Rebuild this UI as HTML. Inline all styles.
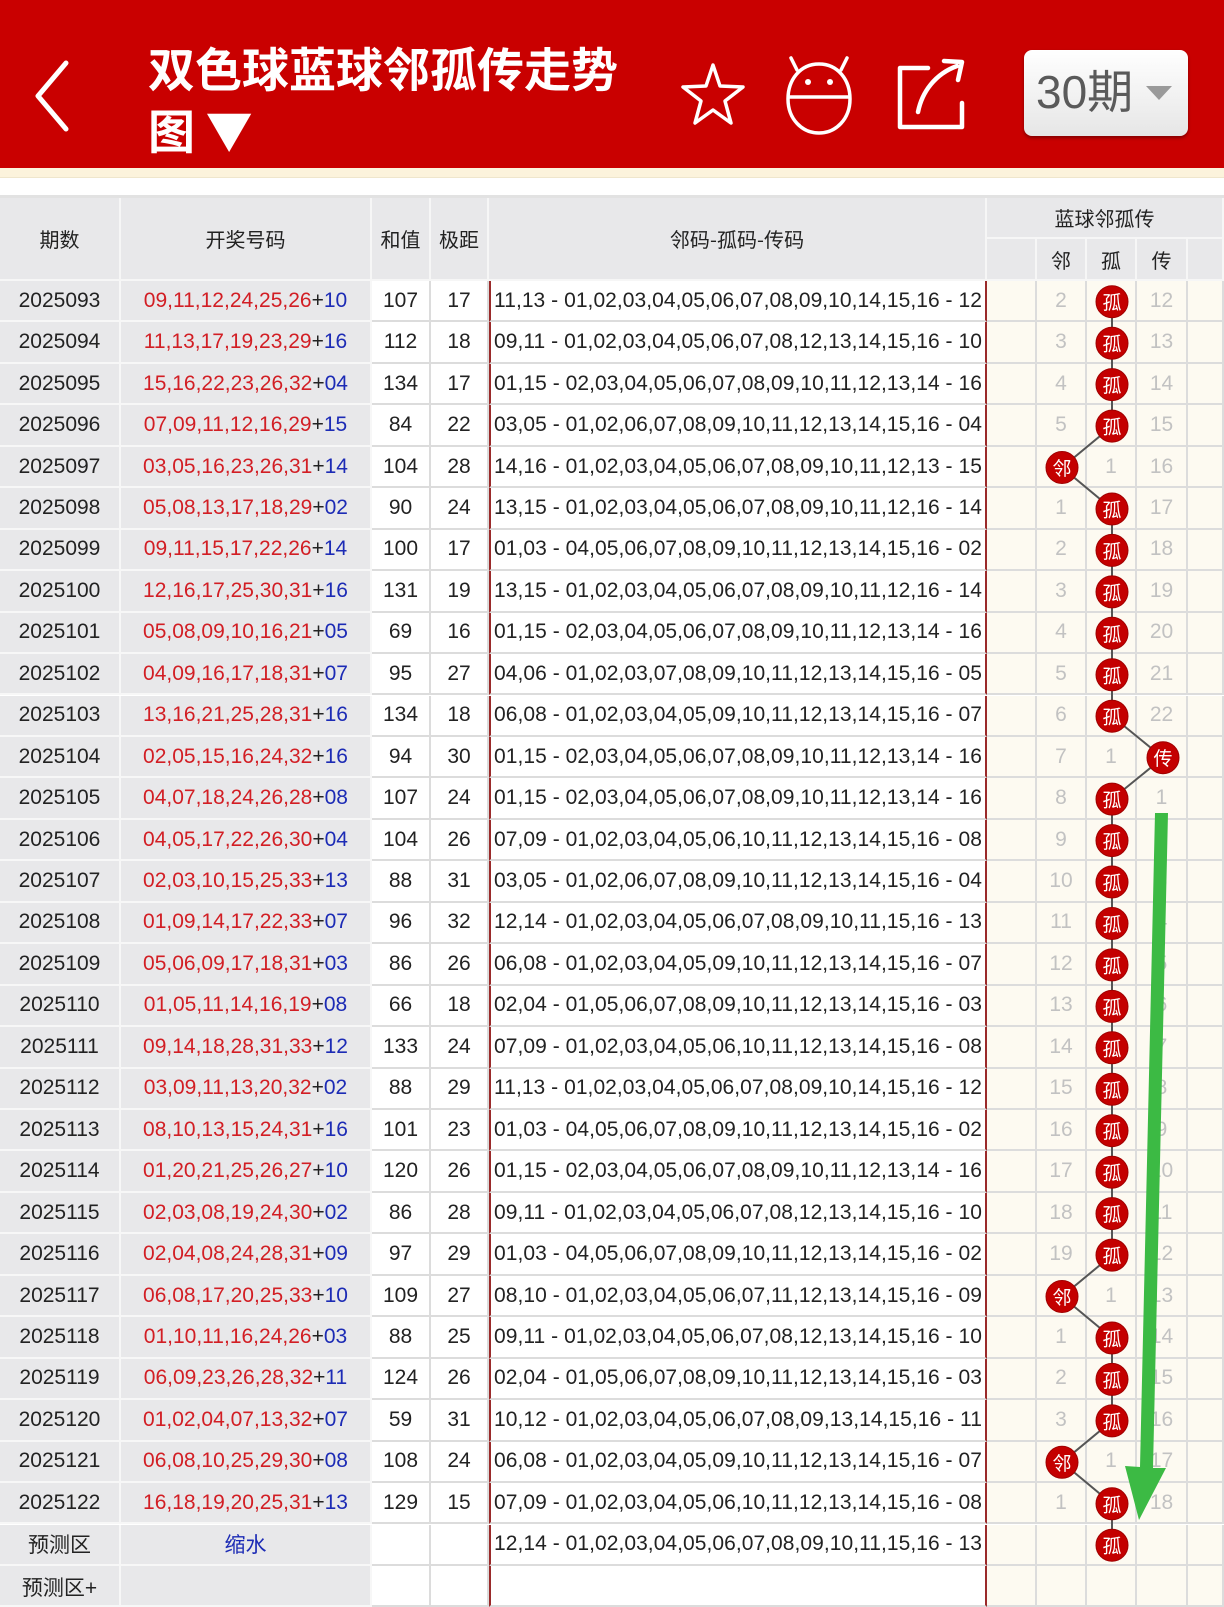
<!DOCTYPE html>
<html><head><meta charset="utf-8"><style>
*{margin:0;padding:0;box-sizing:border-box}
body{width:1224px;height:1589px;overflow:hidden;background:#fff;position:relative;font-family:"Liberation Sans","Noto Sans CJK SC",sans-serif}
.hd{position:absolute;left:0;top:0;width:1224px;height:168px;background:#c90000}
.cream{position:absolute;left:0;top:168px;width:1224px;height:10px;background:#fcf3dc;border-bottom:1px solid #efe6cc}
.title{position:absolute;left:148px;top:36px;color:#fff;font-size:47px;font-weight:bold;line-height:62px;font-family:"Noto Sans CJK SC","WenQuanYi Zen Hei",sans-serif;letter-spacing:0px}
.dd{position:absolute;left:1024px;top:50px;width:164px;height:86px;border-radius:8px;background:linear-gradient(#ffffff,#e6e6e6);box-shadow:0 2px 3px rgba(0,0,0,.35)}
.dd span{position:absolute;left:12px;top:14px;font-size:46px;color:#5a5a5a;font-family:"Liberation Sans","Noto Sans CJK SC",sans-serif;line-height:56px}
.r{position:absolute;left:0;width:1224px;height:41.45px}
.c{position:absolute;top:0;height:100%;display:flex;align-items:center;justify-content:center;font-size:21px;color:#222;border-right:2px solid #dcdcdc;border-bottom:2px solid #dcdcdc;white-space:nowrap}
.g{background:#e8e8ea;border-color:#f7f7f7}
.w{background:#fff}
.y{background:#fdfaf1;color:#c2c2c2;font-size:21px}
.c1{left:0;width:121px}.c2{left:121px;width:251px}.c3{left:372px;width:59px}.c4{left:431px;width:58px}
.c5{left:489px;width:498px;border-left:2px solid #9a2a2a;border-right:2px solid #9a2a2a;letter-spacing:0.05px}
.c6{left:987px;width:50px}.c7{left:1037px;width:50px}.c8{left:1087px;width:50px}.c9{left:1137px;width:51px}.c10{left:1188px;width:36px}
.rd{color:#d21e24}.bl{color:#1c2bb5}
.th .c{background:#e8e8ea;border-color:#f6f6f6;font-family:"Noto Sans CJK SC",sans-serif;font-size:20px;color:#222}
</style></head><body>
<div class="hd"></div>
<div class="cream"></div>
<div style="position:absolute;left:0;top:195px;width:1224px;height:3px;background:#e2e2e2"></div>
<svg style="position:absolute;left:0;top:0" width="1224" height="168">
<polyline points="66,63 38,96 66,129" fill="none" stroke="#fff" stroke-width="5" stroke-linecap="round" stroke-linejoin="round"/>
<polygon points="713,65 720,86 743,87 725,101 731,123 713,110 695,123 701,101 683,87 706,86" fill="none" stroke="#fff" stroke-width="3.5" stroke-linejoin="round"/>
<path d="M797,70 L791,58 M841,70 L847,58" stroke="#fff" stroke-width="3.5" stroke-linecap="round"/>
<path d="M819,64 C800,64 788,80 788,99 C788,119 802,133 819,133 C836,133 850,119 850,99 C850,80 838,64 819,64 Z" fill="none" stroke="#fff" stroke-width="3.5"/>
<line x1="788" y1="97" x2="850" y2="97" stroke="#fff" stroke-width="3.5"/>
<circle cx="808" cy="82" r="3" fill="#fff"/><circle cx="830" cy="82" r="3" fill="#fff"/>
<path d="M928,68 L900,68 L900,127 L962,127 L962,103" fill="none" stroke="#fff" stroke-width="4.5" stroke-linejoin="round" stroke-linecap="round"/>
<path d="M918,112 C922,92 935,74 957,66" fill="none" stroke="#fff" stroke-width="4.5" stroke-linecap="round"/>
<path d="M944,61 L962,62 L958,80" fill="none" stroke="#fff" stroke-width="4.5" stroke-linecap="round" stroke-linejoin="round"/>
</svg>
<div class="title">双色球蓝球邻孤传走势<br>图 ▼</div>
<div class="dd"><span>30期</span><svg style="position:absolute;left:122px;top:36px" width="28" height="16"><polygon points="0,0 26,0 13,14" fill="#9a9a9a"/></svg></div>

<div class="r th" style="top:198px;height:83px">
<div class="c c1">期数</div><div class="c c2">开奖号码</div><div class="c c3">和值</div><div class="c c4">极距</div>
<div class="c c5" style="border-left:none;border-right:none;border-right:2px solid #f6f6f6">邻码-孤码-传码</div>
<div class="c" style="left:987px;width:237px;height:41px">蓝球邻孤传</div>
<div class="c c6" style="top:41px;height:42px"></div><div class="c c7" style="top:41px;height:42px">邻</div><div class="c c8" style="top:41px;height:42px">孤</div><div class="c c9" style="top:41px;height:42px">传</div><div class="c c10" style="top:41px;height:42px"></div>
</div>

<div class="r" style="top:281.0px"><div class="c g c1">2025093</div><div class="c g c2"><span class="rd">09,11,12,24,25,26</span>+<span class="bl">10</span></div><div class="c w c3">107</div><div class="c w c4">17</div><div class="c w c5">11,13 - 01,02,03,04,05,06,07,08,09,10,14,15,16 - 12</div><div class="c y c6"></div><div class="c y c7">2</div><div class="c y c8"></div><div class="c y c9">12</div><div class="c y c10"></div></div>
<div class="r" style="top:322.45px"><div class="c g c1">2025094</div><div class="c g c2"><span class="rd">11,13,17,19,23,29</span>+<span class="bl">16</span></div><div class="c w c3">112</div><div class="c w c4">18</div><div class="c w c5">09,11 - 01,02,03,04,05,06,07,08,12,13,14,15,16 - 10</div><div class="c y c6"></div><div class="c y c7">3</div><div class="c y c8"></div><div class="c y c9">13</div><div class="c y c10"></div></div>
<div class="r" style="top:363.9px"><div class="c g c1">2025095</div><div class="c g c2"><span class="rd">15,16,22,23,26,32</span>+<span class="bl">04</span></div><div class="c w c3">134</div><div class="c w c4">17</div><div class="c w c5">01,15 - 02,03,04,05,06,07,08,09,10,11,12,13,14 - 16</div><div class="c y c6"></div><div class="c y c7">4</div><div class="c y c8"></div><div class="c y c9">14</div><div class="c y c10"></div></div>
<div class="r" style="top:405.35px"><div class="c g c1">2025096</div><div class="c g c2"><span class="rd">07,09,11,12,16,29</span>+<span class="bl">15</span></div><div class="c w c3">84</div><div class="c w c4">22</div><div class="c w c5">03,05 - 01,02,06,07,08,09,10,11,12,13,14,15,16 - 04</div><div class="c y c6"></div><div class="c y c7">5</div><div class="c y c8"></div><div class="c y c9">15</div><div class="c y c10"></div></div>
<div class="r" style="top:446.8px"><div class="c g c1">2025097</div><div class="c g c2"><span class="rd">03,05,16,23,26,31</span>+<span class="bl">14</span></div><div class="c w c3">104</div><div class="c w c4">28</div><div class="c w c5">14,16 - 01,02,03,04,05,06,07,08,09,10,11,12,13 - 15</div><div class="c y c6"></div><div class="c y c7"></div><div class="c y c8">1</div><div class="c y c9">16</div><div class="c y c10"></div></div>
<div class="r" style="top:488.25px"><div class="c g c1">2025098</div><div class="c g c2"><span class="rd">05,08,13,17,18,29</span>+<span class="bl">02</span></div><div class="c w c3">90</div><div class="c w c4">24</div><div class="c w c5">13,15 - 01,02,03,04,05,06,07,08,09,10,11,12,16 - 14</div><div class="c y c6"></div><div class="c y c7">1</div><div class="c y c8"></div><div class="c y c9">17</div><div class="c y c10"></div></div>
<div class="r" style="top:529.7px"><div class="c g c1">2025099</div><div class="c g c2"><span class="rd">09,11,15,17,22,26</span>+<span class="bl">14</span></div><div class="c w c3">100</div><div class="c w c4">17</div><div class="c w c5">01,03 - 04,05,06,07,08,09,10,11,12,13,14,15,16 - 02</div><div class="c y c6"></div><div class="c y c7">2</div><div class="c y c8"></div><div class="c y c9">18</div><div class="c y c10"></div></div>
<div class="r" style="top:571.15px"><div class="c g c1">2025100</div><div class="c g c2"><span class="rd">12,16,17,25,30,31</span>+<span class="bl">16</span></div><div class="c w c3">131</div><div class="c w c4">19</div><div class="c w c5">13,15 - 01,02,03,04,05,06,07,08,09,10,11,12,16 - 14</div><div class="c y c6"></div><div class="c y c7">3</div><div class="c y c8"></div><div class="c y c9">19</div><div class="c y c10"></div></div>
<div class="r" style="top:612.6px"><div class="c g c1">2025101</div><div class="c g c2"><span class="rd">05,08,09,10,16,21</span>+<span class="bl">05</span></div><div class="c w c3">69</div><div class="c w c4">16</div><div class="c w c5">01,15 - 02,03,04,05,06,07,08,09,10,11,12,13,14 - 16</div><div class="c y c6"></div><div class="c y c7">4</div><div class="c y c8"></div><div class="c y c9">20</div><div class="c y c10"></div></div>
<div class="r" style="top:654.05px"><div class="c g c1">2025102</div><div class="c g c2"><span class="rd">04,09,16,17,18,31</span>+<span class="bl">07</span></div><div class="c w c3">95</div><div class="c w c4">27</div><div class="c w c5">04,06 - 01,02,03,07,08,09,10,11,12,13,14,15,16 - 05</div><div class="c y c6"></div><div class="c y c7">5</div><div class="c y c8"></div><div class="c y c9">21</div><div class="c y c10"></div></div>
<div class="r" style="top:695.5px"><div class="c g c1">2025103</div><div class="c g c2"><span class="rd">13,16,21,25,28,31</span>+<span class="bl">16</span></div><div class="c w c3">134</div><div class="c w c4">18</div><div class="c w c5">06,08 - 01,02,03,04,05,09,10,11,12,13,14,15,16 - 07</div><div class="c y c6"></div><div class="c y c7">6</div><div class="c y c8"></div><div class="c y c9">22</div><div class="c y c10"></div></div>
<div class="r" style="top:736.95px"><div class="c g c1">2025104</div><div class="c g c2"><span class="rd">02,05,15,16,24,32</span>+<span class="bl">16</span></div><div class="c w c3">94</div><div class="c w c4">30</div><div class="c w c5">01,15 - 02,03,04,05,06,07,08,09,10,11,12,13,14 - 16</div><div class="c y c6"></div><div class="c y c7">7</div><div class="c y c8">1</div><div class="c y c9"></div><div class="c y c10"></div></div>
<div class="r" style="top:778.4px"><div class="c g c1">2025105</div><div class="c g c2"><span class="rd">04,07,18,24,26,28</span>+<span class="bl">08</span></div><div class="c w c3">107</div><div class="c w c4">24</div><div class="c w c5">01,15 - 02,03,04,05,06,07,08,09,10,11,12,13,14 - 16</div><div class="c y c6"></div><div class="c y c7">8</div><div class="c y c8"></div><div class="c y c9">1</div><div class="c y c10"></div></div>
<div class="r" style="top:819.85px"><div class="c g c1">2025106</div><div class="c g c2"><span class="rd">04,05,17,22,26,30</span>+<span class="bl">04</span></div><div class="c w c3">104</div><div class="c w c4">26</div><div class="c w c5">07,09 - 01,02,03,04,05,06,10,11,12,13,14,15,16 - 08</div><div class="c y c6"></div><div class="c y c7">9</div><div class="c y c8"></div><div class="c y c9">2</div><div class="c y c10"></div></div>
<div class="r" style="top:861.3px"><div class="c g c1">2025107</div><div class="c g c2"><span class="rd">02,03,10,15,25,33</span>+<span class="bl">13</span></div><div class="c w c3">88</div><div class="c w c4">31</div><div class="c w c5">03,05 - 01,02,06,07,08,09,10,11,12,13,14,15,16 - 04</div><div class="c y c6"></div><div class="c y c7">10</div><div class="c y c8"></div><div class="c y c9">3</div><div class="c y c10"></div></div>
<div class="r" style="top:902.75px"><div class="c g c1">2025108</div><div class="c g c2"><span class="rd">01,09,14,17,22,33</span>+<span class="bl">07</span></div><div class="c w c3">96</div><div class="c w c4">32</div><div class="c w c5">12,14 - 01,02,03,04,05,06,07,08,09,10,11,15,16 - 13</div><div class="c y c6"></div><div class="c y c7">11</div><div class="c y c8"></div><div class="c y c9">4</div><div class="c y c10"></div></div>
<div class="r" style="top:944.2px"><div class="c g c1">2025109</div><div class="c g c2"><span class="rd">05,06,09,17,18,31</span>+<span class="bl">03</span></div><div class="c w c3">86</div><div class="c w c4">26</div><div class="c w c5">06,08 - 01,02,03,04,05,09,10,11,12,13,14,15,16 - 07</div><div class="c y c6"></div><div class="c y c7">12</div><div class="c y c8"></div><div class="c y c9">5</div><div class="c y c10"></div></div>
<div class="r" style="top:985.65px"><div class="c g c1">2025110</div><div class="c g c2"><span class="rd">01,05,11,14,16,19</span>+<span class="bl">08</span></div><div class="c w c3">66</div><div class="c w c4">18</div><div class="c w c5">02,04 - 01,05,06,07,08,09,10,11,12,13,14,15,16 - 03</div><div class="c y c6"></div><div class="c y c7">13</div><div class="c y c8"></div><div class="c y c9">6</div><div class="c y c10"></div></div>
<div class="r" style="top:1027.1px"><div class="c g c1">2025111</div><div class="c g c2"><span class="rd">09,14,18,28,31,33</span>+<span class="bl">12</span></div><div class="c w c3">133</div><div class="c w c4">24</div><div class="c w c5">07,09 - 01,02,03,04,05,06,10,11,12,13,14,15,16 - 08</div><div class="c y c6"></div><div class="c y c7">14</div><div class="c y c8"></div><div class="c y c9">7</div><div class="c y c10"></div></div>
<div class="r" style="top:1068.55px"><div class="c g c1">2025112</div><div class="c g c2"><span class="rd">03,09,11,13,20,32</span>+<span class="bl">02</span></div><div class="c w c3">88</div><div class="c w c4">29</div><div class="c w c5">11,13 - 01,02,03,04,05,06,07,08,09,10,14,15,16 - 12</div><div class="c y c6"></div><div class="c y c7">15</div><div class="c y c8"></div><div class="c y c9">8</div><div class="c y c10"></div></div>
<div class="r" style="top:1110.0px"><div class="c g c1">2025113</div><div class="c g c2"><span class="rd">08,10,13,15,24,31</span>+<span class="bl">16</span></div><div class="c w c3">101</div><div class="c w c4">23</div><div class="c w c5">01,03 - 04,05,06,07,08,09,10,11,12,13,14,15,16 - 02</div><div class="c y c6"></div><div class="c y c7">16</div><div class="c y c8"></div><div class="c y c9">9</div><div class="c y c10"></div></div>
<div class="r" style="top:1151.45px"><div class="c g c1">2025114</div><div class="c g c2"><span class="rd">01,20,21,25,26,27</span>+<span class="bl">10</span></div><div class="c w c3">120</div><div class="c w c4">26</div><div class="c w c5">01,15 - 02,03,04,05,06,07,08,09,10,11,12,13,14 - 16</div><div class="c y c6"></div><div class="c y c7">17</div><div class="c y c8"></div><div class="c y c9">10</div><div class="c y c10"></div></div>
<div class="r" style="top:1192.9px"><div class="c g c1">2025115</div><div class="c g c2"><span class="rd">02,03,08,19,24,30</span>+<span class="bl">02</span></div><div class="c w c3">86</div><div class="c w c4">28</div><div class="c w c5">09,11 - 01,02,03,04,05,06,07,08,12,13,14,15,16 - 10</div><div class="c y c6"></div><div class="c y c7">18</div><div class="c y c8"></div><div class="c y c9">11</div><div class="c y c10"></div></div>
<div class="r" style="top:1234.35px"><div class="c g c1">2025116</div><div class="c g c2"><span class="rd">02,04,08,24,28,31</span>+<span class="bl">09</span></div><div class="c w c3">97</div><div class="c w c4">29</div><div class="c w c5">01,03 - 04,05,06,07,08,09,10,11,12,13,14,15,16 - 02</div><div class="c y c6"></div><div class="c y c7">19</div><div class="c y c8"></div><div class="c y c9">12</div><div class="c y c10"></div></div>
<div class="r" style="top:1275.8px"><div class="c g c1">2025117</div><div class="c g c2"><span class="rd">06,08,17,20,25,33</span>+<span class="bl">10</span></div><div class="c w c3">109</div><div class="c w c4">27</div><div class="c w c5">08,10 - 01,02,03,04,05,06,07,11,12,13,14,15,16 - 09</div><div class="c y c6"></div><div class="c y c7"></div><div class="c y c8">1</div><div class="c y c9">13</div><div class="c y c10"></div></div>
<div class="r" style="top:1317.25px"><div class="c g c1">2025118</div><div class="c g c2"><span class="rd">01,10,11,16,24,26</span>+<span class="bl">03</span></div><div class="c w c3">88</div><div class="c w c4">25</div><div class="c w c5">09,11 - 01,02,03,04,05,06,07,08,12,13,14,15,16 - 10</div><div class="c y c6"></div><div class="c y c7">1</div><div class="c y c8"></div><div class="c y c9">14</div><div class="c y c10"></div></div>
<div class="r" style="top:1358.7px"><div class="c g c1">2025119</div><div class="c g c2"><span class="rd">06,09,23,26,28,32</span>+<span class="bl">11</span></div><div class="c w c3">124</div><div class="c w c4">26</div><div class="c w c5">02,04 - 01,05,06,07,08,09,10,11,12,13,14,15,16 - 03</div><div class="c y c6"></div><div class="c y c7">2</div><div class="c y c8"></div><div class="c y c9">15</div><div class="c y c10"></div></div>
<div class="r" style="top:1400.15px"><div class="c g c1">2025120</div><div class="c g c2"><span class="rd">01,02,04,07,13,32</span>+<span class="bl">07</span></div><div class="c w c3">59</div><div class="c w c4">31</div><div class="c w c5">10,12 - 01,02,03,04,05,06,07,08,09,13,14,15,16 - 11</div><div class="c y c6"></div><div class="c y c7">3</div><div class="c y c8"></div><div class="c y c9">16</div><div class="c y c10"></div></div>
<div class="r" style="top:1441.6px"><div class="c g c1">2025121</div><div class="c g c2"><span class="rd">06,08,10,25,29,30</span>+<span class="bl">08</span></div><div class="c w c3">108</div><div class="c w c4">24</div><div class="c w c5">06,08 - 01,02,03,04,05,09,10,11,12,13,14,15,16 - 07</div><div class="c y c6"></div><div class="c y c7"></div><div class="c y c8">1</div><div class="c y c9">17</div><div class="c y c10"></div></div>
<div class="r" style="top:1483.05px"><div class="c g c1">2025122</div><div class="c g c2"><span class="rd">16,18,19,20,25,31</span>+<span class="bl">13</span></div><div class="c w c3">129</div><div class="c w c4">15</div><div class="c w c5">07,09 - 01,02,03,04,05,06,10,11,12,13,14,15,16 - 08</div><div class="c y c6"></div><div class="c y c7">1</div><div class="c y c8"></div><div class="c y c9">18</div><div class="c y c10"></div></div>
<div class="r" style="top:1524.5px"><div class="c g c1">预测区</div><div class="c g c2"><span class="bl">缩水</span></div><div class="c w c3"></div><div class="c w c4"></div><div class="c w c5">12,14 - 01,02,03,04,05,06,07,08,09,10,11,15,16 - 13</div><div class="c y c6"></div><div class="c y c7"></div><div class="c y c8"></div><div class="c y c9"></div><div class="c y c10"></div></div>
<div class="r" style="top:1566px"><div class="c g c1" style="align-items:flex-start;padding-top:6px">预测区+</div><div class="c g c2"></div><div class="c w c3"></div><div class="c w c4"></div><div class="c w c5"></div><div class="c y c6"></div><div class="c y c7"></div><div class="c y c8"></div><div class="c y c9"></div><div class="c y c10"></div></div>

<svg style="position:absolute;left:0;top:0" width="1224" height="1589">
<polyline points="1112,301.7 1112,426.1 1062,467.5 1112,509 1112,716.2 1163,757.7 1112,799.1 1112,1255.1 1062,1296.5 1112,1338 1112,1420.9 1062,1462.3 1112,1503.8 1112,1545.2" fill="none" stroke="#555" stroke-width="2"/>
<g fill="#c40000" stroke="#a00000" stroke-width="1">
<circle cx="1112" cy="301.7" r="16"/><circle cx="1112" cy="343.2" r="16"/><circle cx="1112" cy="384.6" r="16"/><circle cx="1112" cy="426.1" r="16"/>
<circle cx="1062" cy="467.5" r="16"/>
<circle cx="1112" cy="509" r="16"/><circle cx="1112" cy="550.4" r="16"/><circle cx="1112" cy="591.9" r="16"/><circle cx="1112" cy="633.3" r="16"/><circle cx="1112" cy="674.8" r="16"/><circle cx="1112" cy="716.2" r="16"/>
<circle cx="1163" cy="757.7" r="16"/>
<circle cx="1112" cy="799.1" r="16"/><circle cx="1112" cy="840.6" r="16"/><circle cx="1112" cy="882" r="16"/><circle cx="1112" cy="923.5" r="16"/><circle cx="1112" cy="964.9" r="16"/><circle cx="1112" cy="1006.4" r="16"/><circle cx="1112" cy="1047.8" r="16"/><circle cx="1112" cy="1089.3" r="16"/><circle cx="1112" cy="1130.7" r="16"/><circle cx="1112" cy="1172.2" r="16"/><circle cx="1112" cy="1213.6" r="16"/><circle cx="1112" cy="1255.1" r="16"/>
<circle cx="1062" cy="1296.5" r="16"/>
<circle cx="1112" cy="1338" r="16"/><circle cx="1112" cy="1379.4" r="16"/><circle cx="1112" cy="1420.9" r="16"/>
<circle cx="1062" cy="1462.3" r="16"/>
<circle cx="1112" cy="1503.8" r="16"/><circle cx="1112" cy="1545.2" r="16"/>
</g>
<g fill="#fff" font-size="19" font-family="Noto Sans CJK SC,sans-serif" text-anchor="middle" dominant-baseline="central">
<text x="1112" y="301.7">孤</text><text x="1112" y="343.2">孤</text><text x="1112" y="384.6">孤</text><text x="1112" y="426.1">孤</text>
<text x="1062" y="467.5">邻</text>
<text x="1112" y="509">孤</text><text x="1112" y="550.4">孤</text><text x="1112" y="591.9">孤</text><text x="1112" y="633.3">孤</text><text x="1112" y="674.8">孤</text><text x="1112" y="716.2">孤</text>
<text x="1163" y="757.7">传</text>
<text x="1112" y="799.1">孤</text><text x="1112" y="840.6">孤</text><text x="1112" y="882">孤</text><text x="1112" y="923.5">孤</text><text x="1112" y="964.9">孤</text><text x="1112" y="1006.4">孤</text><text x="1112" y="1047.8">孤</text><text x="1112" y="1089.3">孤</text><text x="1112" y="1130.7">孤</text><text x="1112" y="1172.2">孤</text><text x="1112" y="1213.6">孤</text><text x="1112" y="1255.1">孤</text>
<text x="1062" y="1296.5">邻</text>
<text x="1112" y="1338">孤</text><text x="1112" y="1379.4">孤</text><text x="1112" y="1420.9">孤</text>
<text x="1062" y="1462.3">邻</text>
<text x="1112" y="1503.8">孤</text><text x="1112" y="1545.2">孤</text>
</g>
<polygon points="1155,813 1168,813 1153,1468 1166,1468 1139,1520 1125,1466 1140,1467" fill="#3cba44"/>
</svg>
</body></html>
